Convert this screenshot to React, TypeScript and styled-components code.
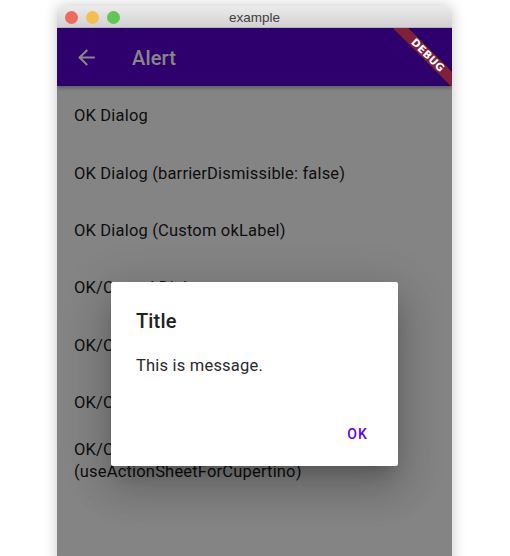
import styled, { createGlobalStyle } from 'styled-components'

const GlobalStyle = createGlobalStyle`
	html, body {
		margin: 0;
		padding: 0;
		background: #fff;
		overflow: hidden;
	}
`
const Page = styled.div`
	width: 510px;
	height: 556px;
	padding: 6px 57px 0;
	box-sizing: border-box;
	overflow: hidden;
`
const Window = styled.div`
	position: relative;
	width: 395px;
	height: 560px;
	border-radius: 6px 6px 0 0;
	background: #fafafa;
	box-shadow: 0 0 14px rgba(0, 0, 0, 0.22);
	overflow: hidden;
	font-family: Roboto, sans-serif;
`
const TitleBar = styled.div`
	position: relative;
	z-index: 3;
	display: flex;
	align-items: center;
	justify-content: center;
	height: 22px;
	padding-top: 2px;
	box-sizing: border-box;
	background: linear-gradient(#ebebeb, #d2d2d2);
	border-bottom: 1px solid #b5b5b5;
	font-family: "Liberation Sans", sans-serif;
	font-size: 13.5px;
	color: #404040;
`
const Lights = styled.div`
	position: absolute;
	left: 8px;
	top: 5px;
	display: flex;
	gap: 8px;
`
const Light = styled.span<{ $color: string }>`
	width: 13px;
	height: 13px;
	border-radius: 50%;
	background: ${(p) => p.$color};
`
const AppBar = styled.div`
	display: flex;
	align-items: center;
	height: 58px;
	padding: 0 16px;
	box-sizing: border-box;
	background: #5500ce;
	box-shadow: 0 2px 4px rgba(0, 0, 0, 0.3);
	color: #fff;
`
const BackIcon = styled.svg`
	width: 25px;
	height: 25px;
	margin-left: 1px;
`
const AppTitle = styled.div`
	margin-left: 33px;
	padding-top: 2px;
	font-size: 20px;
	font-weight: 500;
	letter-spacing: 0.15px;
`
const List = styled.div`
	display: flex;
	flex-direction: column;
	padding-top: 1.5px;
`
const Item = styled.div`
	display: flex;
	align-items: center;
	min-height: 57.4px;
	padding: 8px 17px;
	box-sizing: border-box;
	font-size: 16.5px;
	line-height: 20px;
	letter-spacing: 0.18px;
	color: #1a1a1a;
`
const TallItem = styled(Item)`
	padding: 6px 17px;
	line-height: 22px;
`
const Scrim = styled.div`
	position: absolute;
	left: 0;
	right: 0;
	top: 22px;
	bottom: 0;
	background: rgba(0, 0, 0, 0.47);
`
const Dialog = styled.div`
	position: absolute;
	left: 54px;
	top: 276px;
	width: 287px;
	height: 183.5px;
	padding: 26px 25px 0;
	box-sizing: border-box;
	background: #fff;
	border-radius: 2px;
	box-shadow: 0 11px 15px -7px rgba(0, 0, 0, 0.2), 0 24px 38px 3px rgba(0, 0, 0, 0.14), 0 9px 46px 8px rgba(0, 0, 0, 0.12);
`
const DialogTitle = styled.div`
	font-size: 20px;
	font-weight: 500;
	line-height: 26px;
	letter-spacing: 0.15px;
	color: #212121;
`
const DialogMessage = styled.div`
	margin-top: 22px;
	font-size: 16.5px;
	line-height: 20px;
	letter-spacing: 0.2px;
	color: #2a2a2a;
`
const OkButton = styled.div`
	position: absolute;
	right: 30px;
	bottom: 24px;
	font-size: 14px;
	font-weight: 500;
	line-height: 16px;
	letter-spacing: 1.1px;
	color: #5a00ee;
`
const DebugBanner = styled.div`
	position: absolute;
	top: 22px;
	right: 0;
	width: 58px;
	height: 58px;
	overflow: hidden;
`
const DebugRibbon = styled.div`
	position: absolute;
	top: 19.5px;
	left: -13px;
	width: 90px;
	height: 11px;
	padding-left: 5px;
	box-sizing: border-box;
	background: #7f2138;
	transform: rotate(45deg);
	box-shadow: 0 0 3px rgba(0, 0, 0, 0.3);
	color: #fff;
	font-family: "DejaVu Sans", sans-serif;
	font-size: 10.5px;
	font-weight: 700;
	line-height: 11px;
	letter-spacing: 0.2px;
	text-align: center;
`

const items = [
	'OK Dialog',
	'OK Dialog (barrierDismissible: false)',
	'OK Dialog (Custom okLabel)',
	'OK/Cancel Dialog',
	'OK/Cancel Dialog',
	'OK/Cancel Dialog',
]

export default function App() {
	return (
		<Page>
			<GlobalStyle />
			<Window>
				<TitleBar>
					<Lights>
						<Light $color="#ed6a5e" />
						<Light $color="#f5bf4f" />
						<Light $color="#62c554" />
					</Lights>
					example
				</TitleBar>
				<AppBar>
					<BackIcon viewBox="0 0 24 24" fill="#fff">
						<path d="M20 11H7.83l5.59-5.59L12 4l-8 8 8 8 1.41-1.41L7.83 13H20v-2z" />
					</BackIcon>
					<AppTitle>Alert</AppTitle>
				</AppBar>
				<List>
					{items.map((item, i) => (
						<Item key={i}>{item}</Item>
					))}
					<TallItem>OK/Cancel Dialog<br />(useActionSheetForCupertino)</TallItem>
				</List>
				<Scrim />
				<DebugBanner>
					<DebugRibbon>DEBUG</DebugRibbon>
				</DebugBanner>
				<Dialog>
					<DialogTitle>Title</DialogTitle>
					<DialogMessage>This is message.</DialogMessage>
					<OkButton>OK</OkButton>
				</Dialog>
			</Window>
		</Page>
	)
}
